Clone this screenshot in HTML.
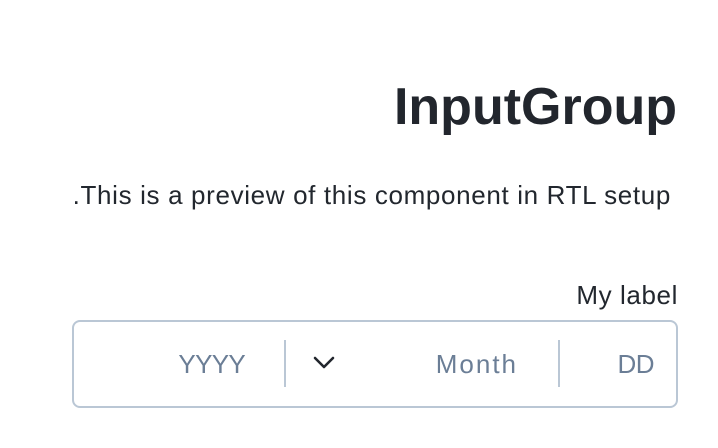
<!DOCTYPE html>
<html><head><style>
body{margin:0;width:718px;height:448px;background:#fff;font-family:"Liberation Sans",sans-serif;position:relative;overflow:hidden;color:#22272e}
.a{position:absolute;white-space:nowrap}
</style></head><body>
<div class="a" style="right:41px;top:77px;font-size:52px;font-weight:bold;letter-spacing:0px;color:#22262d">InputGroup</div>
<div class="a" style="right:47px;top:180px;font-size:26px;letter-spacing:0.65px">.This is a preview of this component in RTL setup</div>
<div class="a" style="right:40px;top:280px;font-size:26px;letter-spacing:0.6px">My label</div>
<div class="a" style="left:72px;top:320px;width:602px;height:84px;border:2px solid #bac7d5;border-radius:8px"></div>
<div class="a" style="left:284px;top:340px;width:2px;height:47px;background:#bac7d5"></div>
<div class="a" style="left:558px;top:340px;width:2px;height:47px;background:#bac7d5"></div>
<div class="a" style="right:473px;top:349px;font-size:26px;color:#6b7e96;letter-spacing:-0.7px">YYYY</div>
<div class="a" style="right:200px;top:349px;font-size:26px;color:#6b7e96;letter-spacing:2px">Month</div>
<div class="a" style="right:64px;top:349px;font-size:26px;color:#6b7e96;letter-spacing:-0.5px">DD</div>
<svg class="a" style="left:312px;top:354px" width="24" height="18" viewBox="0 0 24 18"><path d="M3 4l9 9 9-9" fill="none" stroke="#22262d" stroke-width="2.6" stroke-linecap="round" stroke-linejoin="round"/></svg>
</body></html>
